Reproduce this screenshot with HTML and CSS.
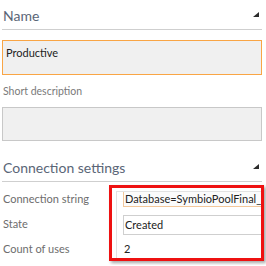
FILE: index.html
```html
<!DOCTYPE html>
<html lang="en">
<head>
  <meta charset="UTF-8" />
  <title>Settings</title>
  <link rel="stylesheet" href="styles.css">
</head>
<body>
  <div class="panel">
    <div class="section-head">
      <span class="section-title">Name</span>
      <span class="corner"></span>
    </div>
    <div class="field field-focus">Productive</div>

    <div class="label">Short description</div>
    <div class="field"></div>

    <div class="section-head second">
      <span class="section-title">Connection settings</span>
      <span class="corner"></span>
    </div>

    <div class="props">
      <div class="prop-label">Connection string</div>
      <div class="prop-value"><div class="box box-orange">Database=SymbioPoolFinal_Production</div></div>
      <div class="prop-label">State</div>
      <div class="prop-value"><div class="box box-tall">Created</div></div>
      <div class="prop-label">Count of uses</div>
      <div class="prop-value plain">2</div>
      <div class="highlight"></div>
    </div>
  </div>
</body>
</html>
```

FILE: styles.css
```css
body {
  margin: 0;
  background: #fff;
  font-family: 'Lato', 'Open Sans', sans-serif;
  overflow: hidden;
}
.panel {
  width: 260px;
  padding-left: 2px;
}
.section-head {
  display: flex;
  justify-content: space-between;
  align-items: flex-start;
  height: 29px;
  border-bottom: 1px solid #cfcfcf;
}
.section-title {
  font-size: 14px;
  color: #5a6677;
  padding-left: 1px;
  line-height: 18px;
  margin-top: 7px;
}
.section-head.second {
  height: 30px;
  margin-top: 10px;
}
.section-head.second .section-title {
  margin-top: 8px;
}
.corner {
  width: 0;
  height: 0;
  border-left: 6px solid transparent;
  border-bottom: 5px solid #2b2b2b;
  margin-top: 12px;
  margin-right: 3px;
}
.section-head.second .corner {
  margin-top: 13px;
}
.field {
  height: 34px;
  background: #f0f0f0;
  border: 1px solid #c8c8c8;
  font-size: 11px;
  line-height: 15px;
  color: #222;
  padding: 4px 3px 0;
  box-sizing: border-box;
}
.field-focus {
  margin-top: 10px;
  border-color: #f9a545;
  height: 35px;
}
.label {
  margin-top: 8px;
  font-size: 10.5px;
  color: #7a7a7a;
  padding-left: 1px;
  line-height: 16px;
}
.label + .field {
  margin-top: 8px;
}
.props {
  position: relative;
  display: grid;
  grid-template-columns: 121px 1fr;
  grid-auto-rows: 25px;
  padding-top: 8px;
}
.prop-label {
  font-size: 11px;
  color: #6d6d6d;
  padding-left: 1px;
  line-height: 18px;
}
.prop-value {
  overflow: hidden;
  font-size: 11px;
  color: #222;
  white-space: nowrap;
}
.box {
  border: 1px solid #cfcfcf;
  line-height: 14px;
  padding-left: 1px;
  margin-right: -6px;
}
.box-orange {
  margin-top: 1px;
  border-color: #f3c79a;
  background: #fbfbfb;
}
.box-tall {
  line-height: 18px;
}
.plain {
  padding-left: 1px;
  line-height: 18px;
}
.highlight {
  position: absolute;
  left: 107px;
  top: 3px;
  width: 149px;
  height: 70px;
  border: 3px solid #ee1111;
  box-shadow: 2px 2px 3px rgba(0, 0, 0, 0.35), inset 4px 3px 0 #fff, inset 5px 4px 0 #e2e2e2;
}
```
